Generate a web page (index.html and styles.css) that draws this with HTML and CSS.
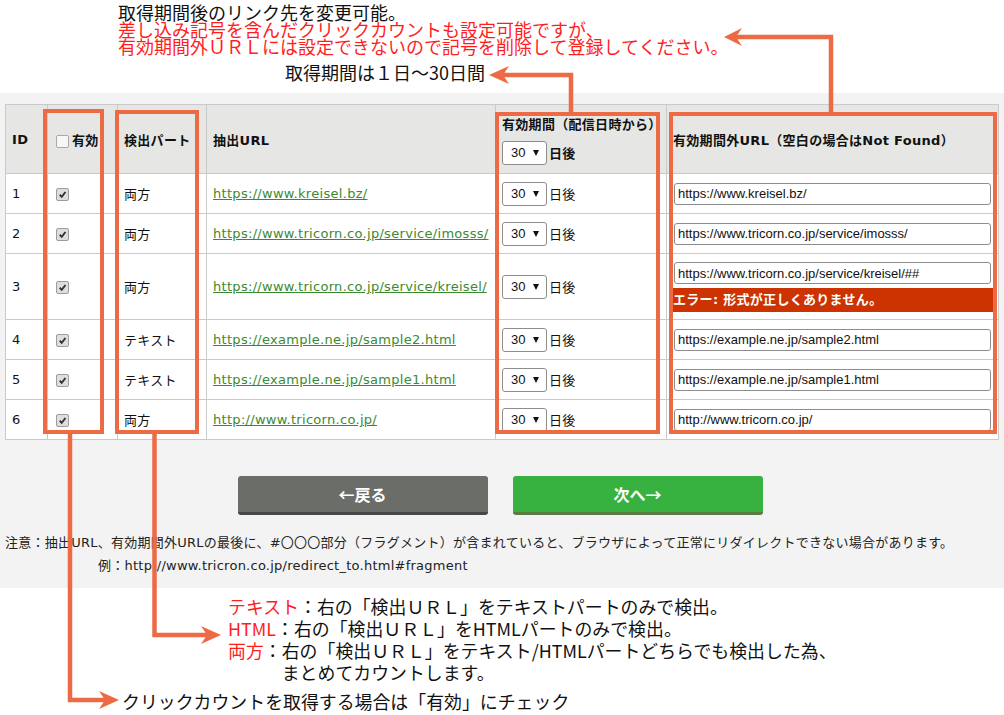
FILE: index.html
```html
<!DOCTYPE html>
<html lang="ja">
<head>
  <meta charset="UTF-8">
  <meta name="viewport" content="width=device-width, initial-scale=1.0">
  <title>クリックカウント設定</title>
  <link rel="stylesheet" href="styles.css">
</head>
<body>
  <div class="notes-top">
    <p>取得期間後のリンク先を変更可能。</p>
    <p class="red">差し込み記号を含んだクリックカウントも設定可能ですが、</p>
    <p class="red">有効期間外ＵＲＬには設定できないので記号を削除して登録してください。</p>
    <p class="period-note">取得期間は１日〜30日間</p>
  </div>

  <div class="panel">
    <table class="url-table">
      <colgroup>
        <col style="width: 42px">
        <col style="width: 70px">
        <col style="width: 89px">
        <col style="width: 289px">
        <col style="width: 171px">
        <col style="width: 332px">
      </colgroup>
      <thead>
        <tr>
          <th>ID</th>
          <th><span class="cb"></span>有効</th>
          <th>検出パート</th>
          <th>抽出URL</th>
          <th class="th-period">
            <div>有効期間（配信日時から）</div>
            <div class="period head-period"><span class="select">30<i class="caret"></i></span>日後</div>
          </th>
          <th>有効期間外URL（空白の場合はNot Found）</th>
        </tr>
      </thead>
      <tbody>
        <tr>
          <td>1</td>
          <td><span class="cb checked"><svg viewBox="0 0 13 13"><path d="M3.2 6.8 L5.6 9.3 L10 3.6"/></svg></span></td>
          <td>両方</td>
          <td><a class="link" href="#">https://www.kreisel.bz/</a></td>
          <td><div class="period"><span class="select">30<i class="caret"></i></span>日後</div></td>
          <td><input class="url-input" type="text" value="https://www.kreisel.bz/"></td>
        </tr>
        <tr>
          <td>2</td>
          <td><span class="cb checked"><svg viewBox="0 0 13 13"><path d="M3.2 6.8 L5.6 9.3 L10 3.6"/></svg></span></td>
          <td>両方</td>
          <td><a class="link" href="#">https://www.tricorn.co.jp/service/imosss/</a></td>
          <td><div class="period"><span class="select">30<i class="caret"></i></span>日後</div></td>
          <td><input class="url-input" type="text" value="https://www.tricorn.co.jp/service/imosss/"></td>
        </tr>
        <tr>
          <td>3</td>
          <td><span class="cb checked"><svg viewBox="0 0 13 13"><path d="M3.2 6.8 L5.6 9.3 L10 3.6"/></svg></span></td>
          <td>両方</td>
          <td><a class="link" href="#">https://www.tricorn.co.jp/service/kreisel/</a></td>
          <td><div class="period"><span class="select">30<i class="caret"></i></span>日後</div></td>
          <td class="has-error">
            <input class="url-input" type="text" value="https://www.tricorn.co.jp/service/kreisel/##">
            <div class="error">エラー: 形式が正しくありません。</div>
          </td>
        </tr>
        <tr>
          <td>4</td>
          <td><span class="cb checked"><svg viewBox="0 0 13 13"><path d="M3.2 6.8 L5.6 9.3 L10 3.6"/></svg></span></td>
          <td>テキスト</td>
          <td><a class="link" href="#">https://example.ne.jp/sample2.html</a></td>
          <td><div class="period"><span class="select">30<i class="caret"></i></span>日後</div></td>
          <td><input class="url-input" type="text" value="https://example.ne.jp/sample2.html"></td>
        </tr>
        <tr>
          <td>5</td>
          <td><span class="cb checked"><svg viewBox="0 0 13 13"><path d="M3.2 6.8 L5.6 9.3 L10 3.6"/></svg></span></td>
          <td>テキスト</td>
          <td><a class="link" href="#">https://example.ne.jp/sample1.html</a></td>
          <td><div class="period"><span class="select">30<i class="caret"></i></span>日後</div></td>
          <td><input class="url-input" type="text" value="https://example.ne.jp/sample1.html"></td>
        </tr>
        <tr>
          <td>6</td>
          <td><span class="cb checked"><svg viewBox="0 0 13 13"><path d="M3.2 6.8 L5.6 9.3 L10 3.6"/></svg></span></td>
          <td>両方</td>
          <td><a class="link" href="#">http://www.tricorn.co.jp/</a></td>
          <td><div class="period"><span class="select">30<i class="caret"></i></span>日後</div></td>
          <td><input class="url-input" type="text" value="http://www.tricorn.co.jp/"></td>
        </tr>
      </tbody>
    </table>

    <div class="actions">
      <button class="btn btn-back">←戻る</button>
      <button class="btn btn-next">次へ→</button>
    </div>

    <p class="caution">注意：抽出URL、有効期間外URLの最後に、#〇〇〇部分（フラグメント）が含まれていると、ブラウザによって正常にリダイレクトできない場合があります。</p>
    <p class="caution example">例：http://www.tricron.co.jp/redirect_to.html#fragment</p>
  </div>

  <div class="notes-bottom">
    <div class="legend">
      <p class="legend-item"><span class="key"><span class="term">テキスト</span>：</span><span>右の「検出ＵＲＬ」をテキストパートのみで検出。</span></p>
      <p class="legend-item"><span class="key"><span class="term">HTML</span>：</span><span>右の「検出ＵＲＬ」をHTMLパートのみで検出。</span></p>
      <p class="legend-item"><span class="key"><span class="term">両方</span>：</span><span>右の「検出ＵＲＬ」をテキスト/HTMLパートどちらでも検出した為、<br>まとめてカウントします。</span></p>
    </div>
    <p class="check-note">クリックカウントを取得する場合は「有効」にチェック</p>
  </div>

  <!-- callout frames and arrows drawn over the screenshot -->
  <svg class="callouts" width="1004" height="715" viewBox="0 0 1004 715">
    <g fill="none" stroke="#ec6b45" stroke-width="4">
      <rect x="45" y="111" width="57" height="321"/>
      <rect x="117" y="112" width="80" height="320"/>
      <rect x="497" y="114" width="161" height="318"/>
      <rect x="671" y="114" width="324" height="318"/>
    </g>
    <g fill="none" stroke="#ec6b45" stroke-width="4.5">
      <polyline points="571,114 571,75 503,75"/>
      <polyline points="831,114 831,37 735,37"/>
      <polyline points="154.5,432 154.5,635 207,635"/>
      <polyline points="70,432 70,700 105,700"/>
    </g>
    <g fill="#ec6b45">
      <polygon points="489,75 509,66 503,75 509,84"/>
      <polygon points="724,37 742,28 736,37 742,46"/>
      <polygon points="221,635 201,626 207,635 201,644"/>
      <polygon points="119,700 99,691 105,700 99,709"/>
    </g>
  </svg>
</body>
</html>
```

FILE: styles.css
```css
body {
  margin: 0;
  position: relative;
  background: #fff;
  color: #111;
  font-family: "Noto Sans CJK JP", sans-serif;
}

p {
  margin: 0;
}

/* annotations above the form */
.notes-top {
  height: 93px;
  box-sizing: border-box;
  padding: 4px 0 0 118px;
  font-size: 18px;
  line-height: 17px;
}

.red {
  color: #ff1e1e;
}

.period-note {
  margin: 9px 0 0 167px;
}

/* grey form area */
.panel {
  height: 495px;
  box-sizing: border-box;
  padding: 11px 0 0 5px;
  background: #f3f3f3;
}

.url-table {
  border-collapse: collapse;
  table-layout: fixed;
  width: 993px;
  background: #fff;
  font-family: "DejaVu Sans", "Noto Sans CJK JP", sans-serif;
  font-size: 13px;
  letter-spacing: 0.3px;
  color: #111;
}

.url-table th,
.url-table td {
  border: 1px solid #cacaca;
  padding: 0 6px;
  text-align: left;
  vertical-align: middle;
  white-space: nowrap;
}

.url-table th {
  height: 68px;
  background: #e6e7e4;
  font-weight: bold;
}

.url-table td {
  height: 39px;
}

.url-table td.has-error {
  padding-top: 8px;
  padding-bottom: 7px;
}

.cb {
  display: inline-block;
  vertical-align: middle;
  width: 13px;
  height: 13px;
  margin: 0 3px 0 2px;
  box-sizing: border-box;
  border: 1px solid #a9a9a9;
  border-radius: 2px;
  background: #f7f7f7;
}

.cb.checked {
  background: #dedede;
  border-color: #9c9c9c;
}

.cb svg {
  display: block;
  width: 11px;
  height: 11px;
  fill: none;
  stroke: #333;
  stroke-width: 2.2;
}

.link {
  color: #3b8a2f;
  text-decoration: underline;
}

.period {
  display: flex;
  align-items: center;
  gap: 2px;
}

.head-period {
  margin-top: 8px;
}

.select {
  display: inline-flex;
  align-items: center;
  width: 45px;
  height: 24px;
  box-sizing: border-box;
  padding: 0 7px 0 8px;
  border: 1px solid #8d8d8d;
  border-radius: 3px;
  background: #fff;
  font-family: "Liberation Sans", sans-serif;
  font-size: 13px;
  font-weight: normal;
  letter-spacing: 0;
}

.caret {
  margin-left: auto;
  width: 0;
  height: 0;
  border-left: 3.5px solid transparent;
  border-right: 3.5px solid transparent;
  border-top: 6px solid #111;
}

.url-input {
  display: block;
  width: 317px;
  height: 22px;
  box-sizing: border-box;
  margin: 0 0 0 1px;
  padding: 0 3px;
  border: 1px solid #8d8d8d;
  border-radius: 3px;
  background: #fff;
  color: #111;
  font-family: "Liberation Sans", sans-serif;
  font-size: 13px;
}

.error {
  width: 320px;
  height: 24px;
  margin: 4px 0 0 0;
  background: #cc3300;
  color: #fff;
  font-weight: bold;
  line-height: 24px;
}

.actions {
  display: flex;
  justify-content: center;
  gap: 25px;
  margin: 36px 0 0 -9px;
}

.btn {
  width: 250px;
  height: 39px;
  padding: 0;
  border: 0;
  border-bottom: 3px solid;
  border-radius: 3px;
  color: #fff;
  font-family: "Noto Sans CJK JP", sans-serif;
  font-size: 16px;
  font-weight: bold;
}

.btn-back {
  background: #6a6d68;
  border-bottom-color: #474846;
}

.btn-next {
  background: #37b140;
  border-bottom-color: #5a7b43;
}

.caution {
  margin-top: 16px;
  font-family: "DejaVu Sans", "Noto Sans CJK JP", sans-serif;
  font-size: 13px;
  letter-spacing: 0.25px;
  line-height: 23px;
  color: #222;
}

.caution + .caution {
  margin-top: 0;
}

.example {
  padding-left: 93px;
}

/* annotations below the form */
.notes-bottom {
  padding-top: 7px;
  font-size: 17.9px;
  line-height: 22px;
}

.legend {
  margin-left: 228px;
}

.legend-item {
  display: flex;
}

.legend-item .key {
  flex: none;
}

.term {
  color: #ff1e1e;
}

.check-note {
  margin: 7px 0 0 122px;
}

.callouts {
  position: absolute;
  top: 0;
  left: 0;
  pointer-events: none;
}
```
